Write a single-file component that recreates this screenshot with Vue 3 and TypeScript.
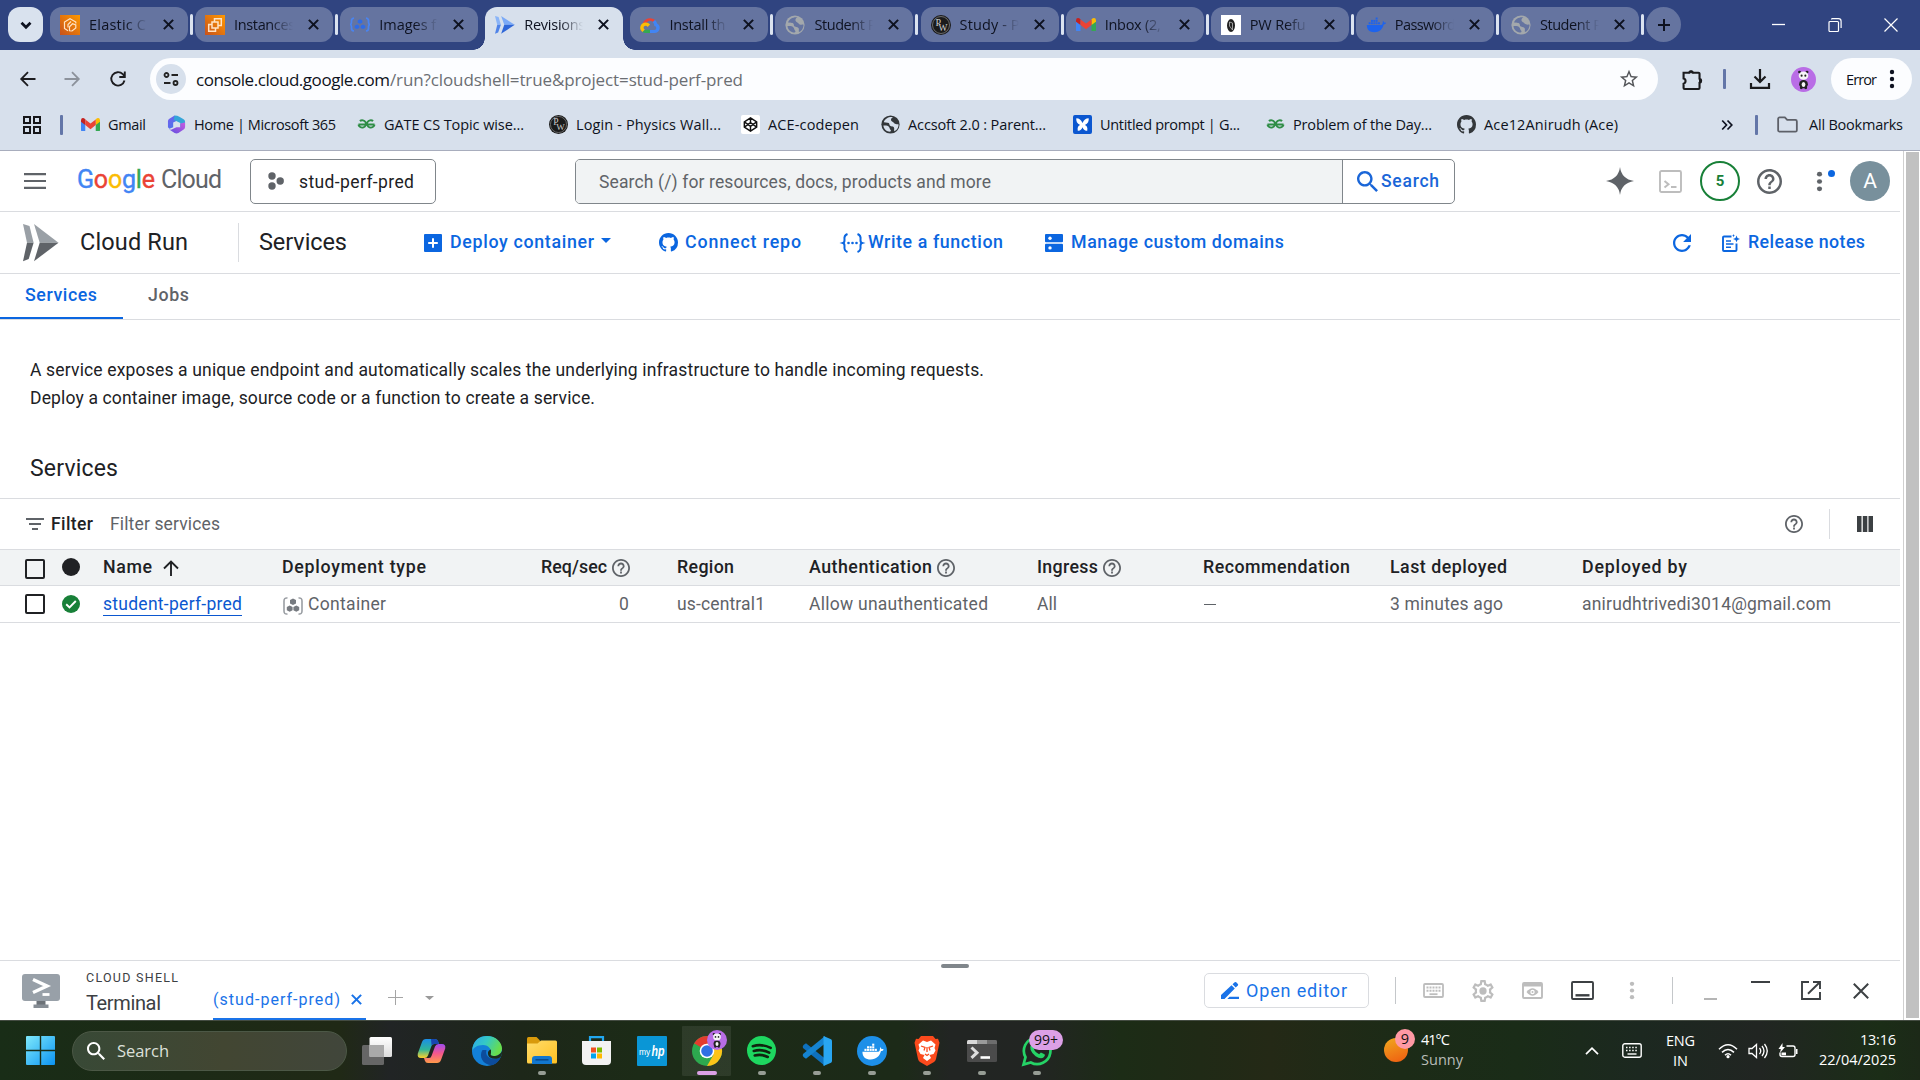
<script setup lang="ts">
import { h } from 'vue'
import type { FunctionalComponent, Directive } from 'vue'

interface Glyph { box: string; body: string }

const GITHUB = 'M8 0C3.58 0 0 3.58 0 8c0 3.54 2.29 6.53 5.47 7.59.4.07.55-.17.55-.38 0-.19-.01-.82-.01-1.49-2.01.37-2.53-.49-2.69-.94-.09-.23-.48-.94-.82-1.13-.28-.15-.68-.52-.01-.53.63-.01 1.08.58 1.23.82.72 1.21 1.87.87 2.33.66.07-.52.28-.87.51-1.07-1.78-.2-3.64-.89-3.64-3.95 0-.87.31-1.59.82-2.15-.08-.2-.36-1.02.08-2.12 0 0 .67-.21 2.2.82.64-.18 1.32-.27 2-.27s1.36.09 2 .27c1.53-1.04 2.2-.82 2.2-.82.44 1.1.16 1.92.08 2.12.51.56.82 1.27.82 2.15 0 3.07-1.87 3.75-3.65 3.95.29.25.54.73.54 1.48 0 1.07-.01 1.93-.01 2.2 0 .21.15.46.55.38A8.01 8.01 0 0 0 16 8c0-4.42-3.58-8-8-8z'
const DOCKER = '<path fill="C" d="M1 10.5h17.2c1.2-.1 1.7-.8 1.6-2 .5-.8.6-2 .2-2.9 1 .4 1.6 1.3 1.8 2.2.9-.2 1.8 0 2.2.4-.4 1.1-1.4 1.7-2.8 1.7C19.8 15.5 16 19 10 19 4.5 19 1 16.2 1 10.5z"/><g fill="C"><rect x="3.2" y="7.4" width="2.3" height="2.3"/><rect x="6" y="7.4" width="2.3" height="2.3"/><rect x="8.8" y="7.4" width="2.3" height="2.3"/><rect x="11.6" y="7.4" width="2.3" height="2.3"/><rect x="14.4" y="7.4" width="2.3" height="2.3"/><rect x="6" y="4.6" width="2.3" height="2.3"/><rect x="8.8" y="4.6" width="2.3" height="2.3"/><rect x="11.6" y="4.6" width="2.3" height="2.3"/><rect x="11.6" y="1.8" width="2.3" height="2.3"/></g>'
const PANDA = '<circle cx="12" cy="12" r="12" fill="#b96de6"/><ellipse cx="12" cy="16.5" rx="4.2" ry="4" fill="#222"/><ellipse cx="12" cy="16.8" rx="1.8" ry="2.4" fill="#f4f4f4"/><circle cx="8.2" cy="4.9" r="1.4" fill="#222"/><circle cx="15.4" cy="4.9" r="1.4" fill="#222"/><ellipse cx="12" cy="8.3" rx="4.6" ry="4" fill="#f6f6f6"/><circle cx="10.2" cy="8.3" r="1" fill="#222"/><circle cx="13.8" cy="8.3" r="1" fill="#222"/><circle cx="9.8" cy="20" r="1.3" fill="#222"/><circle cx="14.2" cy="20" r="1.3" fill="#222"/>'

const glyphs: Record<string, Glyph> = {
  down: { box: '0 0 24 24', body: '<path d="M6 9l6 6 6-6" fill="none" stroke="currentColor" stroke-width="3.6"/>' },
  close: { box: '0 0 10 10', body: '<path d="M.8.8l8.4 8.4M9.2.8L.8 9.2" fill="none" stroke="currentColor" stroke-width="1.9"/>' },
  closeThin: { box: '0 0 16 16', body: '<path d="M.8.8l14.4 14.4M15.2.8L.8 15.2" fill="none" stroke="currentColor" stroke-width="2"/>' },
  plus: { box: '0 0 14 14', body: '<path d="M7 1v12M1 7h12" fill="none" stroke="currentColor" stroke-width="2"/>' },
  plusThin: { box: '0 0 15 15', body: '<path d="M7.500 0v15M0 7.500h15" fill="none" stroke="currentColor" stroke-width="1"/>' },
  winMin: { box: '0 0 14 14', body: '<path d="M0 6.5h13" stroke="#fff" stroke-width="1.3"/>' },
  winRestore: { box: '0 0 14 14', body: '<path d="M1 4.5a1 1 0 0 1 1-1h7.5a1 1 0 0 1 1 1v8a1 1 0 0 1-1 1H2a1 1 0 0 1-1-1zM3.5 1.500a1 1 0 0 1 .9-.8h6.1a2.6 2.6 0 0 1 2.6 2.6v6.7" fill="none" stroke="#fff" stroke-width="1.2"/>' },
  winClose: { box: '0 0 14 14', body: '<path d="M.5.5l13 13M13.500.5l-13 13" stroke="#fff" stroke-width="1.2"/>' },
  ecs: { box: '0 0 20 20', body: '<defs><linearGradient id="aws" x1="0" y1="1" x2="1" y2="0"><stop offset="0" stop-color="#c8511b"/><stop offset="1" stop-color="#f90"/></linearGradient></defs><path fill="url(#aws)" d="M0 0h20v20H0z"/><path d="M15.800 8.500V7L10 3.800 4.500 7v6.500L8 15.800M8 12.500v-3l3-3M9.500 15.800v-4l3-3 3.300 1.200v3L12 16z" fill="none" stroke="#ffe3c4" stroke-width="1.2"/>' },
  ec2: { box: '0 0 20 20', body: '<path fill="url(#aws)" d="M0 0h20v20H0z"/><path d="M7 7h6v6H7zM9.500 7V3.700h6.800v6.800H13M7 9.500H3.700v6.800h6.800V13" fill="none" stroke="#ffe3c4" stroke-width="1.5"/>' },
  registry: { box: '0 0 20 16', body: '<path d="M4 1Q1 1.500 1.500 5 1.500 8 0 8q1.500 0 1.500 3Q1 14.500 4 15M16 1q3 .5 2.500 4 0 3 1.500 3-1.500 0-1.500 3 .5 3.500-2.500 4" fill="none" stroke="#4a84f0" stroke-width="1.7"/><g fill="#2f6be6"><path d="M10 2.500l2.300 1.200v2.400L10 7.300 7.700 6.100V3.700zM7 8l2.300 1.200v2.500L7 12.900l-2.300-1.200V9.200zM13 8l2.300 1.200v2.500L13 12.900l-2.300-1.200V9.200z"/></g>' },
  runBlue: { box: '0 0 36 38', body: '<path d="M0 0l6.500 2 4.100 16.700H4z" fill="#8ab4f8"/><path d="M4 18.700h6.600L5.700 35 0 37.300z" fill="#4f83e8"/><path d="M11 0l24.500 18.700H16.700z" fill="#7baaf7"/><path d="M16.700 18.700h18.800L11 37.300z" fill="#2f67d8"/>' },
  runGray: { box: '0 0 36 38', body: '<path d="M0 0l6.500 2 4.100 16.700H4z" fill="#9aa0a6"/><path d="M4 18.700h6.600L5.700 35 0 37.300z" fill="#5f6368"/><path d="M11 0l24.500 18.700H16.700z" fill="#9aa0a6"/><path d="M16.700 18.700h18.800L11 37.300z" fill="#5f6368"/>' },
  gcp: { box: '0 0 24 20', body: '<path d="M16 5.800l2-2A9.200 9.200 0 0 0 3.300 8l2.700-.3L8.500 6.500A5.400 5.400 0 0 1 15.500 5.900z" fill="#ea4335"/><path d="M20.600 8A9 9 0 0 0 18 3.800L15.200 6.600a5 5 0 0 1 1.900 4v.5a2.500 2.500 0 0 1 0 5H12v3.900h5.100A6.500 6.500 0 0 0 20.600 8z" fill="#4285f4"/><path d="M6.800 20H12v-4H6.800a2.500 2.500 0 0 1-1-.2l-2.900 2.800A6.500 6.500 0 0 0 6.800 20z" fill="#34a853"/><path d="M6.800 6.900A6.500 6.500 0 0 0 2.900 18.600l2.900-2.900a2.500 2.500 0 1 1 3.300-3.300l3-3a6.500 6.500 0 0 0-5.300-2.500z" fill="#fbbc05"/>' },
  globe: { box: '0 0 20 20', body: '<circle cx="10" cy="10" r="9.600" fill="currentColor"/><path d="M12.500 2.300C10 3.500 9.800 6 12 7.200c2 1 1.500 2.300 4.500 2.500 1.800 0 2-.5 2 .8-.6 4.500-3 6-4.500 6.500-.6-1.500.4-2.500-.5-4-1.200-1.600-4.700-.4-4.700-3.500C8.500 7.700 6 8 3 7.600 4 4 8 1.800 12.500 2.300zM2.500 11c2.500-.2 5 0 6 1.500s.5 2 1.500 3 .3 1.700-.5 2C6 17.500 2.800 15 2.500 11z" fill="var(--cut)"/>' },
  pw: { box: '0 0 20 20', body: '<circle cx="10" cy="10" r="10" fill="#1b1b1b"/><circle cx="10" cy="10" r="8.500" fill="none" stroke="#8d8d8d" stroke-width=".7"/><text x="4.600" y="10.800" font-family="Liberation Serif,serif" font-size="10" fill="#ccc">P</text><text x="7.500" y="15.800" font-family="Liberation Serif,serif" font-size="9.500" fill="#ccc">W</text>' },
  pwBox: { box: '0 0 20 20', body: '<path fill="#fff" d="M0 0h20v20H0z"/><ellipse cx="10" cy="10.500" rx="4" ry="6.500" fill="#222"/><path d="M8.500 7v4l3 4V8z" fill="none" stroke="#bbb" stroke-width=".8"/>' },
  gmail: { box: '0 0 20 16', body: '<path d="M0 3.500V14q0 1 1 1h3.500V6z" fill="#4285f4"/><path d="M20 3.500V14q0 1-1 1h-3.500V6z" fill="#34a853"/><path d="M0 3.500v1.500l4.500 3.500V2.600L3.300 1.300Q.3 0 0 3.500z" fill="#c5221f"/><path d="M20 3.500v1.500l-4.500 3.500V2.600l1.200-1.300Q19.700 0 20 3.500z" fill="#fbbc04"/><path d="M4.500 2.600L10 7l5.500-4.400v5.900L10 13 4.500 8.500z" fill="#ea4335"/>' },
  docker: { box: '0 0 24 20', body: DOCKER.replace(/"C"/g, '"#1d63ed"') },
  back: { box: '0 0 16 16', body: '<path d="M15.500 8H1.500M8 1.200L1.200 8 8 14.800" fill="none" stroke="currentColor" stroke-width="1.800"/>' },
  fwd: { box: '0 0 16 16', body: '<path d="M.5 8h14M8 1.200L14.800 8 8 14.800" fill="none" stroke="currentColor" stroke-width="1.800"/>' },
  reload: { box: '0 0 16 16', body: '<path d="M14.500 9.500A6.700 6.700 0 1 1 12.800 3.200L14.500 5M14.800.5V6H9.300" fill="none" stroke="currentColor" stroke-width="1.900"/>' },
  tune: { box: '0 0 16 16', body: '<g fill="none" stroke="currentColor" stroke-width="1.800"><circle cx="3.500" cy="4" r="2"/><path d="M8.500 4H15M1 12h6.500"/><circle cx="12.500" cy="12" r="2"/></g>' },
  star: { box: '0 0 24 24', body: '<path fill="currentColor" d="M22 9.240l-7.190-.62L12 2 9.190 8.630 2 9.240l5.460 4.730L5.820 21 12 17.270 18.180 21l-1.630-7.030L22 9.240zM12 15.400l-3.760 2.270 1-4.280-3.320-2.880 4.380-.38L12 6.100l1.710 4.040 4.380.38-3.320 2.880 1 4.280L12 15.400z"/>' },
  ext: { box: '0 0 20 20', body: '<path d="M1.500 3.500h5.200a2 2 0 0 1 3.800 0h5.200a1 1 0 0 1 1 1v4.800a2 2 0 0 1 0 3.900V18a1 1 0 0 1-1 1H2.500a1 1 0 0 1-1-1v-4a2.600 2.600 0 0 0 0-5z" fill="none" stroke="currentColor" stroke-width="2"/><path d="M6.700 3.500a2 2.200 0 0 1 3.800 0zM16.700 9.300a2.200 2 0 0 1 0 3.900z" fill="currentColor" stroke="currentColor"/>' },
  download: { box: '0 0 20 20', body: '<path d="M10 0v12M4.500 7.500l5.500 5.500 5.500-5.500M1 14v4.800h18V14" fill="none" stroke="currentColor" stroke-width="2.200"/>' },
  panda: { box: '0 0 24 24', body: PANDA },
  dots: { box: '0 0 6 20', body: '<g fill="currentColor"><circle cx="3" cy="3" r="2.200"/><circle cx="3" cy="10" r="2.200"/><circle cx="3" cy="17" r="2.200"/></g>' },
  apps: { box: '0 0 18 18', body: '<path d="M1 1h6v6H1zM11 1h6v6h-6zM1 11h6v6H1zM11 11h6v6h-6z" fill="none" stroke="currentColor" stroke-width="2"/>' },
  m365: { box: '0 0 20 20', body: '<defs><linearGradient id="m3a" x1="0" y1="0" x2="1" y2="1"><stop offset="0" stop-color="#7a5cf0"/><stop offset="1" stop-color="#3a7de8"/></linearGradient><linearGradient id="m3b" x1="0" y1="1" x2="1" y2="0"><stop offset="0" stop-color="#5b4fe0"/><stop offset="1" stop-color="#c95be0"/></linearGradient></defs><path d="M8 .5L2.500 4Q1 5 1 6.500V13l1.500 1.500 4-1.500V8l5-2.500z" fill="url(#m3a)"/><path d="M8 .5q3 0 5 1.300l4.500 2.700Q19 5.500 19 7v5l-5 1V8.500L7 5z" fill="#35a5d8"/><path d="M19 8v5q0 1.500-1.500 2.300L12 19q-2 1-4 0l-6-4q2 1 4.500-.5L10 12.800l4 .2V9z" fill="url(#m3b)"/>' },
  gfg: { box: '0 0 20 12', body: '<path d="M9.300 6H1.500M1.500 6A4 4 0 1 0 3 2.200M10.700 6h7.800M18.500 6A4 4 0 1 1 17 2.200" fill="none" stroke="#2f8d46" stroke-width="2"/>' },
  codepen: { box: '0 0 20 20', body: '<rect width="20" height="20" rx="2" fill="#fff"/><path d="M10 3l6.500 4.300v5.400L10 17l-6.500-4.300V7.300zM10 3v4.500M10 12.500V17M3.500 7.300L10 12l6.500-4.700M3.500 12.700L10 8l6.500 4.700" fill="none" stroke="#111" stroke-width="1.500"/>' },
  prompt: { box: '0 0 20 20', body: '<rect width="20" height="20" rx="2" fill="#0b57d0"/><path d="M3.500 3.500q4.500 0 6.500 5 2-5 6.500-5 .8 5-4 7 3.300 1 2.500 6-3.500.5-5-3.500-1.500 4-5 3.500-.8-5 2.500-6-4.800-2-4-7z" fill="#fff"/>' },
  github: { box: '0 0 16 16', body: `<path fill="currentColor" d="${GITHUB}"/>` },
  more: { box: '0 0 12 12', body: '<path d="M1.200 1.500L5.500 6l-4.300 4.500M6.500 1.500L10.800 6l-4.300 4.500" fill="none" stroke="currentColor" stroke-width="1.700"/>' },
  folder: { box: '0 0 22 18', body: '<path d="M1.200 3a1.500 1.500 0 0 1 1.500-1.500h5.500l2.500 2.700h8.600A1.500 1.500 0 0 1 20.800 5.700v9.300a1.500 1.500 0 0 1-1.500 1.500H2.700A1.500 1.500 0 0 1 1.200 15z" fill="none" stroke="currentColor" stroke-width="1.900"/>' },
  menu: { box: '0 0 22 16', body: '<path d="M0 1.200h22M0 8h22M0 14.800h22" stroke="currentColor" stroke-width="2.200"/>' },
  hexes: { box: '0 0 16 18', body: '<g fill="currentColor"><circle cx="4" cy="4" r="3.700"/><circle cx="12.200" cy="9" r="3.700"/><circle cx="4" cy="14" r="3.700"/></g>' },
  search: { box: '3 3 17.500 17.500', body: '<path fill="currentColor" d="M15.500 14h-.79l-.28-.27C15.410 12.590 16 11.110 16 9.500 16 5.910 13.090 3 9.500 3S3 5.910 3 9.500 5.910 16 9.500 16c1.610 0 3.090-.59 4.230-1.570l.27.28v.79l5 4.990L20.490 19l-4.990-5zm-6 0C7.010 14 5 11.990 5 9.500S7.010 5 9.500 5 14 7.010 14 9.500 11.990 14 9.500 14z"/>' },
  spark: { box: '0 0 28 28', body: '<path fill="currentColor" d="M14 0q1.500 12 14 14-12.500 2-14 14Q12.500 16 0 14 12.500 12 14 0z"/>' },
  shell: { box: '0 0 23 23', body: '<rect x="1" y="1" width="21" height="21" rx="1.500" fill="none" stroke="currentColor" stroke-width="1.900"/><path d="M5.500 11l4 3.300-4 3.300M12 17h5.500" fill="none" stroke="currentColor" stroke-width="2"/>' },
  help: { box: '2 2 20 20', body: '<path fill="currentColor" d="M11 18h2v-2h-2v2zm1-16C6.480 2 2 6.480 2 12s4.480 10 10 10 10-4.480 10-10S17.520 2 12 2zm0 18c-4.410 0-8-3.590-8-8s3.590-8 8-8 8 3.590 8 8-3.590 8-8 8zm0-14c-2.210 0-4 1.790-4 4h2c0-1.100.9-2 2-2s2 .9 2 2c0 2-3 1.750-3 5h2c0-2.250 3-2.500 3-5 0-2.210-1.790-4-4-4z"/>' },
  addBox: { box: '0 0 18 18', body: '<rect width="18" height="18" rx="1" fill="currentColor"/><path d="M9 4.200v9.600M4.200 9h9.600" stroke="#fff" stroke-width="2"/>' },
  caret: { box: '0 0 10 5', body: '<path d="M0 0h10L5 5z" fill="currentColor"/>' },
  func: { box: '0 0 21 20', body: '<path d="M5.500 1Q1.800 2.500 2.500 6.500 2.700 9.500 1 10q1.700.5 1.500 3.500Q1.800 17.500 5.500 19M15.500 1q3.700 1.500 3 5.500-.2 3 1.500 3.500-1.700.5-1.500 3.500.7 4-3 5.500" fill="none" stroke="currentColor" stroke-width="2"/><g fill="currentColor"><circle cx="6.500" cy="10" r="1.300"/><circle cx="10.500" cy="10" r="1.300"/><circle cx="14.500" cy="10" r="1.300"/></g>' },
  dns: { box: '0 0 18 18', body: '<rect width="18" height="8.300" rx="1" fill="currentColor"/><rect y="9.700" width="18" height="8.300" rx="1" fill="currentColor"/><circle cx="5" cy="4.200" r="1.700" fill="#fff"/><circle cx="5" cy="13.900" r="1.700" fill="#fff"/>' },
  refresh: { box: '4 4 16 16', body: '<path fill="currentColor" d="M17.650 6.350C16.200 4.900 14.210 4 12 4c-4.420 0-7.990 3.580-7.990 8s3.570 8 7.990 8c3.730 0 6.840-2.550 7.730-6h-2.080c-.82 2.330-3.040 4-5.650 4-3.310 0-6-2.690-6-6s2.690-6 6-6c1.660 0 3.140.69 4.220 1.780L13 11h7V4l-2.350 2.350z"/>' },
  notes: { box: '0 0 18 18', body: '<path d="M9.500 2.500H2a1 1 0 0 0-1 1V16a1 1 0 0 0 1 1h11.500a1 1 0 0 0 1-1V9.500" fill="none" stroke="currentColor" stroke-width="1.900"/><path d="M4 7h5M4 10h7.500M4 13.200h5" stroke="currentColor" stroke-width="1.500"/><path d="M14.500 1.500l1 2.400 2.500 1-2.500 1-1 2.400-1-2.400-2.500-1 2.500-1zM11.500 0l.5 1.200 1 .5-1 .4-.5 1.200-.5-1.200-1-.4 1-.5z" fill="currentColor"/>' },
  filter: { box: '0 0 18 12', body: '<path d="M0 1h18M3 6h12M6 11h6" stroke="currentColor" stroke-width="2"/>' },
  columns: { box: '0 0 16 16', body: '<path d="M0 0h4.500v16H0zM5.800 0h4.500v16H5.800zM11.500 0H16v16h-4.500z" fill="currentColor"/>' },
  up: { box: '0 0 16 16', body: '<path d="M8 16V1.500M1 8.500l7-7 7 7" fill="none" stroke="currentColor" stroke-width="1.900"/>' },
  ok: { box: '0 0 18 18', body: '<circle cx="9" cy="9" r="9" fill="#188038"/><path d="M4.200 9.300l3.300 3.200 6.300-6.500" fill="none" stroke="#fff" stroke-width="1.900"/>' },
  container: { box: '0 0 20 18', body: '<path d="M4.500 1Q1 .5 1 4v10q0 3.500 3.500 3M15.500 1Q19 .5 19 4v10q0 3.500-3.500 3" fill="none" stroke="#9a9ea3" stroke-width="1.600"/><g fill="#777b80"><path d="M10 1.500l3 1.500v3.500L10 8 7 6.500V3zM6.700 8.500l2.900 1.500v3.300l-2.900 1.500-2.900-1.500V10zM13.300 8.500l2.900 1.500v3.300l-2.900 1.500-2.900-1.500V10z"/></g>' },
  monitor: { box: '0 0 38 34', body: '<rect width="38" height="27" rx="3" fill="#98a0a8"/><path d="M14.500 27h9v4h-9z" fill="#6c7278"/><path d="M11.500 30.500h15V34h-15z" fill="#868d94"/><path d="M11 5.500l14 6.500-14 6.500" fill="none" stroke="#fff" stroke-width="3.400"/><path d="M20.500 20.500h7" stroke="#fff" stroke-width="2.800"/>' },
  pencil: { box: '0 0 19 17', body: '<path d="M0 17v-4L10.500 3.200l3.300 3.300L3.500 17zM11.500 2.300L13.700.3q.8-.6 1.500 0l1.700 1.800q.6.700 0 1.400l-2.200 2.100zM8.500 14.700H18V17H6.300z" fill="currentColor"/>' },
  keyboard: { box: '0 0 21 15', body: '<rect x="1" y="1" width="19" height="13" rx="1" fill="none" stroke="currentColor" stroke-width="1.800"/><path d="M3.500 4.500h14M3.500 7.700h14" stroke="currentColor" stroke-width="2" stroke-dasharray="2 1"/><path d="M6.500 11.200h8" stroke="currentColor" stroke-width="1.800"/>' },
  gear: { box: '2 2 20 20', body: '<path fill="currentColor" d="M19.430 12.980c.04-.32.07-.64.07-.98 0-.34-.03-.66-.07-.98l2.110-1.650c.19-.15.24-.42.12-.64l-2-3.460c-.09-.16-.26-.25-.44-.25-.06 0-.12.010-.17.030l-2.490 1c-.52-.4-1.080-.73-1.690-.98l-.38-2.650C14.460 2.180 14.250 2 14 2h-4c-.25 0-.46.18-.49.42l-.38 2.650c-.61.25-1.170.59-1.690.98l-2.490-1c-.06-.02-.12-.03-.18-.03-.17 0-.34.090-.43.250l-2 3.460c-.13.220-.07.490.120.640l2.110 1.650c-.04.320-.07.650-.07.980 0 .330.030.660.070.980l-2.110 1.650c-.19.150-.24.420-.12.640l2 3.460c.09.160.26.250.44.250.06 0 .12-.01.170-.03l2.490-1c.52.400 1.080.730 1.690.980l.38 2.650c.03.240.24.420.49.420h4c.25 0 .46-.18.490-.42l.38-2.650c.61-.25 1.170-.59 1.690-.98l2.490 1c.06.020.12.030.18.030.17 0 .34-.09.430-.25l2-3.460c.12-.22.070-.49-.12-.64l-2.110-1.650zM17.500 12c0 .210-.02.430-.05.730l-.14 1.130 1.970 1.540-.7 1.210-2.310-.93-.9.680c-.43.320-.84.560-1.250.730l-1.060.430-.36 2.480h-1.400l-.35-2.480-1.060-.43c-.43-.18-.83-.41-1.230-.71l-.91-.7-2.330.940-.7-1.210 1.970-1.540-.14-1.130c-.06-.6-.06-.9 0-1.470l.14-1.130-1.970-1.540.7-1.210 2.310.930.9-.68c.43-.32.840-.56 1.250-.73l1.060-.43.36-2.480h1.390l.35 2.480 1.060.430c.43.180.83.410 1.230.710l.91.700 2.330-.94.700 1.210-1.960 1.550.14 1.130c.04.310.05.520.05.730z"/><circle cx="12" cy="12" r="3.300" fill="currentColor"/>' },
  preview: { box: '0 0 21 17', body: '<rect x="1" y="1" width="19" height="15" rx="1" fill="none" stroke="currentColor" stroke-width="1.900"/><path d="M1 1h19v3.500H1z" fill="currentColor"/><path d="M4.500 10q6-7.500 12 0-6 7.500-12 0z" fill="currentColor"/><circle cx="10.500" cy="10" r="2.200" fill="#fff"/><circle cx="10.500" cy="10" r="1" fill="currentColor"/>' },
  dock: { box: '0 0 23 19', body: '<rect x="1" y="1" width="21" height="17" rx="1" fill="none" stroke="currentColor" stroke-width="1.900"/><path d="M4.500 14.300h14" stroke="currentColor" stroke-width="2.400"/>' },
  openNew: { box: '0 0 20 19', body: '<path d="M8 1H1v17h18v-7M12 1h7v7M19 1L7 12.800" fill="none" stroke="currentColor" stroke-width="1.900"/>' },
  windows: { box: '0 0 29 29', body: '<defs><linearGradient id="wn" x1="0" y1="0" x2="1" y2="1"><stop offset="0" stop-color="#7fe9fb"/><stop offset="1" stop-color="#0b93f2"/></linearGradient></defs><path d="M1 0h12.800v13.800H0V1a1 1 0 0 1 1-1zM15.200 0H28a1 1 0 0 1 1 1v12.800H15.200zM0 15.200h13.800V29H1a1 1 0 0 1-1-1zM15.200 15.200H29V28a1 1 0 0 1-1 1H15.200z" fill="url(#wn)"/>' },
  taskview: { box: '0 0 30 28', body: '<defs><linearGradient id="tv" x1="0" y1="0" x2="0" y2="1"><stop offset="0" stop-color="#fff"/><stop offset="1" stop-color="#dcdcdc"/></linearGradient></defs><rect y="8" width="22" height="20" rx="1.500" fill="#666"/><rect x="7.500" width="22.500" height="20" rx="1.500" fill="url(#tv)"/><path d="M7.500 8H22v12H7.500z" fill="#a9a9a9"/>' },
  copilot: { box: '0 0 29 26', body: '<defs><linearGradient id="cp1" x1="0" y1="0" x2="0" y2="1"><stop offset="0" stop-color="#1b8ee8"/><stop offset=".55" stop-color="#2fb59a"/><stop offset="1" stop-color="#ffd02a"/></linearGradient><linearGradient id="cp2" x1="0" y1="0" x2="0" y2="1"><stop offset="0" stop-color="#a04bf0"/><stop offset=".5" stop-color="#f5588c"/><stop offset="1" stop-color="#ff9a4a"/></linearGradient></defs><path d="M9 1h9q2.500 0 3.200 2.500L22 6h-5q-2 0-2.700 2.500L11 17.500Q10 20 7.500 20H4Q0 20 .8 15.500L5 4Q6 1 9 1z" fill="url(#cp1)"/><path d="M20 25h-9q-2.500 0-3.200-2.500L7 20h5q2 0 2.700-2.500L18 8.500Q19 6 21.500 6H25q4 0 3.200 4.500L24 22q-1 3-4 3z" fill="url(#cp2)"/><path d="M14 1h4q2.500 0 3.200 2.500L22 6h-5q-1.500 0-2.400 1.800z" fill="#1746b0"/>' },
  edge: { box: '0 0 30 30', body: '<defs><linearGradient id="eg" x1="0" y1="0" x2="1" y2=".4"><stop offset="0" stop-color="#2aa7ee"/><stop offset=".5" stop-color="#35c9c4"/><stop offset="1" stop-color="#68dd4c"/></linearGradient></defs><circle cx="15" cy="15" r="15" fill="#1380d8"/><path d="M.5 12Q3 0 15 0c9 0 15 6.500 15 12.500 0 5-4 7.500-7.500 7.500-4 0-5-1.500-4-3C20 14 17 9 11 9 5 9 1 12 .5 15z" fill="url(#eg)"/><path d="M10.500 14c-4 6 0 15 9.500 15.200 3.500-1.200 6.500-3.500 8-6.500.4-.8-.3-1.100-1-.8C20 25 12.500 21 14.500 14z" fill="#0c4c9c"/><path d="M19 17q-1.500 3.500 4 3 5-.8 7-5 .6 3-1.500 6.200-.5.200-1.500.7-5 2-9-.5-2.500-2-2-5.500 1-2.500 3-2.500z" fill="#1c2b1a"/>' },
  explorer: { box: '0 0 30 27', body: '<defs><linearGradient id="ex" x1="0" y1="0" x2="1" y2="1"><stop offset="0" stop-color="#ffdc6b"/><stop offset="1" stop-color="#ffc122"/></linearGradient></defs><path d="M0 1.500Q0 0 1.500 0h8L13 3.500V8H0z" fill="#d99a0b"/><path d="M0 6.500h10.500L14 3.500h14.500Q30 3.500 30 5v20q0 1.500-1.500 1.500h-27Q0 26.500 0 25z" fill="url(#ex)"/><path d="M5 27v-5q0-3 3-3h14q3 0 3 3v5z" fill="#1277cf"/><path d="M8.500 22.800h13" stroke="#0a4a8c" stroke-width="1.500"/>' },
  store: { box: '0 0 29 29', body: '<path d="M8 7V1.200h13V7" fill="none" stroke="#21a7f0" stroke-width="2.200"/><path d="M0 5h29v20q0 4-4 4H4q-4 0-4-4z" fill="#f2f2f2"/><path d="M9 11.500h5v5H9z" fill="#f25022"/><path d="M15 11.500h5v5h-5z" fill="#7fba00"/><path d="M9 17.500h5v5H9z" fill="#00a4ef"/><path d="M15 17.500h5v5h-5z" fill="#ffb900"/>' },
  myhp: { box: '0 0 30 30', body: '<rect width="30" height="30" rx="1" fill="#0a96d6"/><text x="2" y="18.500" font-family="Liberation Sans,sans-serif" font-size="8.500" fill="#fff">my</text><text x="14.500" y="19.500" font-family="Liberation Sans,sans-serif" font-size="14" font-style="italic" font-weight="700" textLength="13" lengthAdjust="spacingAndGlyphs" fill="#fff">hp</text>' },
  chrome: { box: '0 0 30 30', body: '<circle cx="15" cy="15" r="15" fill="#2da94f"/><path d="M15 15L2 7.500A15 15 0 0 1 28 7.500H15z" fill="#e33b2e"/><path d="M15 7.500h13A15 15 0 0 1 15 30l6.500-11.300z" fill="#fcc419"/><path d="M2 7.500l6.500 11.200L15 15z" fill="#2da94f"/><circle cx="15" cy="15" r="7.300" fill="#fff"/><circle cx="15" cy="15" r="5.800" fill="#2f6fe4"/>' },
  spotify: { box: '0 0 30 30', body: '<circle cx="15" cy="15" r="15" fill="#1ed760"/><path d="M6 10.500q9.500-2.700 18.500 1.800M7 15.500q8.500-2.300 16 1.700M8 20.200q7-1.900 13.500 1.500" fill="none" stroke="#10240f" stroke-width="2.700" stroke-linecap="round"/>' },
  vscode: { box: '0 0 30 30', body: '<path d="M1.500 9L4 7.300 23 22.500V30L1 12q-.8-1.500.5-3z" fill="#0e70bd"/><path d="M1.500 21L4 22.700 23 7.500V0L1 18q-.8 1.500.5 3z" fill="#1583d0"/><path d="M21.500 0L29 3.200q1 .6 1 2v19.600q0 1.400-1 2L21.500 30Z" fill="#29a6f2"/>' },
  dockerApp: { box: '0 0 30 30', body: `<circle cx="15" cy="15" r="15" fill="#1d8fe8"/><g transform="translate(4.500 6) scale(.92)">${DOCKER.replace(/"C"/g, '"#fff"')}</g>` },
  brave: { box: '0 0 26 30', body: '<path d="M7 0h12l2.500 3 2.500-.3 1.500 4L25 9l-3 14q-.5 2-2 3l-7 4-7-4q-1.500-1-2-3L1 9 .5 6.700 2 2.700l2.500.3z" fill="#fb4a1c"/><path d="M13 6l4-1.500 4.500 4-1 3.500 1 2.500-2 3.500-4 1 1.500 3-4 3-4-3 1.500-3-4-1-2-3.500 1-2.500-1-3.500L9 4.500z" fill="#fff"/><path d="M7 10l4 1.500-1 3M19 10l-4 1.500 1 3M11 18l2 1.500 2-1.500M13 11v5" fill="none" stroke="#fb4a1c" stroke-width="1.300"/>' },
  terminal: { box: '0 0 30 22', body: '<rect width="30" height="22" rx="1.500" fill="#4b4b4b"/><path d="M0 4V1.500Q0 0 1.500 0H10v4z" fill="#d8d8d8"/><path d="M10 0h10v4H10z" fill="#9b9b9b"/><path d="M20 0h8.500Q30 0 30 1.500V4H20z" fill="#6d6d6d"/><path d="M4.500 7.500l5.500 5.200-5.500 5.200" fill="none" stroke="#ddd" stroke-width="3"/><path d="M13.500 17.500H23" stroke="#fff" stroke-width="2.600"/>' },
  whatsapp: { box: '0 0 30 30', body: '<path d="M1.500 28.500l2-7.300A13.300 13.300 0 1 1 8.800 26.500z" fill="none" stroke="#25d366" stroke-width="2.700"/><path d="M9 8.500q2-2 3 .2l1.200 2.700q-.4 1.300-1.300 2 1.900 3.500 5.200 4.800l1.800-1.700 3.600 1.700q1.200.8-.5 2.800-3 2.800-8.400-.8Q6 14 9 8.500z" fill="#25d366"/>' },
  chevUp: { box: '0 0 14 8', body: '<path d="M1 7.200l6-6 6 6" fill="none" stroke="#fff" stroke-width="1.700"/>' },
  kbWin: { box: '0 0 20 15', body: '<rect x=".8" y=".8" width="18.400" height="13.400" rx="2" fill="none" stroke="#fff" stroke-width="1.400"/><path d="M4 4.500h12M4 7.500h12" stroke="#fff" stroke-width="1.600" stroke-dasharray="1.500 1.600"/><path d="M5.500 11h9" stroke="#fff" stroke-width="1.400"/>' },
  wifi: { box: '0 0 20 16', body: '<path d="M1 6.200q9-9 18 0M4 9.400q6-6 12 0M7 12.300q3-3 6 0" fill="none" stroke="#fff" stroke-width="1.500"/><circle cx="10" cy="13.700" r="1.600" fill="#fff"/>' },
  volume: { box: '0 0 20 16', body: '<path d="M1 5.500h3L8.500 1.500v13L4 10.500H1zM11.500 5q2.500 3 0 6M14 3q4 5 0 10M16.500 1q5.500 7 0 14" fill="none" stroke="#fff" stroke-width="1.300"/>' },
  battery: { box: '0 0 20 16', body: '<path d="M8.500 3H15a2 2 0 0 1 2 2v6.500a2 2 0 0 1-2 2H4a2 2 0 0 1-2-2V9.500" fill="none" stroke="#fff" stroke-width="1.400"/><path d="M18 6h1.500v5H18zM3.500 9.500H8v2.700H3.500zM4.500 0l-4 6h2.300L2 10l5-6H4.500z" fill="#fff"/>' },
}

const Ico: FunctionalComponent<{ n: string; w: number; t?: number }> = (p) =>
  h('svg', {
    viewBox: glyphs[p.n].box,
    width: p.w,
    height: p.t ?? p.w,
    preserveAspectRatio: 'none',
    class: 'ico',
    innerHTML: glyphs[p.n].body,
  })
Ico.props = ['n', 'w', 't']

/* Tracks a label out or in so it takes exactly the given width. */
const vFit: Directive<HTMLElement, number> = {
  mounted(el, { value }) {
    const range = document.createRange()
    range.selectNodeContents(el)
    const natural = range.getBoundingClientRect().width
    const count = Math.max(1, (el.textContent ?? '').trim().length - 1)
    el.style.letterSpacing = `${((value - natural) / count).toFixed(3)}px`
    el.style.width = `${value}px`
  },
}

interface Tab { icon: string; h?: number; label: string; w: number; active?: boolean; sep?: boolean }
const tabs: Tab[] = [
  { icon: 'ecs', label: 'Elastic C', w: 57, sep: true },
  { icon: 'ec2', label: 'Instances', w: 61, sep: true },
  { icon: 'registry', h: 15, label: 'Images f', w: 57 },
  { icon: 'runBlue', h: 18, label: 'Revisions', w: 61, active: true },
  { icon: 'gcp', h: 16, label: 'Install th', w: 56, sep: true },
  { icon: 'globe', label: 'Student P', w: 62, sep: true },
  { icon: 'pw', label: 'Study - P', w: 60, sep: true },
  { icon: 'gmail', h: 15, label: 'Inbox (2,', w: 56, sep: true },
  { icon: 'pwBox', label: 'PW Refu', w: 56, sep: true },
  { icon: 'docker', h: 17, label: 'Password', w: 61, sep: true },
  { icon: 'globe', label: 'Student P', w: 62, sep: true },
]

interface Mark { icon: string; h?: number; label: string; w: number; slot: number }
const marks: Mark[] = [
  { icon: 'gmail', h: 15, label: 'Gmail', w: 38, slot: 86 },
  { icon: 'm365', label: 'Home | Microsoft 365', w: 142, slot: 190 },
  { icon: 'gfg', h: 11, label: 'GATE CS Topic wise...', w: 140, slot: 192 },
  { icon: 'pw', label: 'Login - Physics Wall...', w: 145, slot: 192 },
  { icon: 'codepen', label: 'ACE-codepen', w: 91, slot: 140 },
  { icon: 'globe', label: 'Accsoft 2.0 : Parent...', w: 138, slot: 192 },
  { icon: 'prompt', label: 'Untitled prompt | G...', w: 140, slot: 193 },
  { icon: 'gfg', h: 11, label: 'Problem of the Day...', w: 139, slot: 191 },
  { icon: 'github', label: 'Ace12Anirudh (Ace)', w: 134, slot: 200 },
]

interface App { icon: string; w: number; h: number; run?: boolean; on?: boolean; badge?: string }
const apps: App[] = [
  { icon: 'taskview', w: 30, h: 28 },
  { icon: 'copilot', w: 29, h: 26 },
  { icon: 'edge', w: 30, h: 30 },
  { icon: 'explorer', w: 30, h: 27, run: true },
  { icon: 'store', w: 29, h: 29 },
  { icon: 'myhp', w: 30, h: 30 },
  { icon: 'chrome', w: 30, h: 30, on: true },
  { icon: 'spotify', w: 29, h: 29, run: true },
  { icon: 'vscode', w: 30, h: 30, run: true },
  { icon: 'dockerApp', w: 30, h: 30, run: true },
  { icon: 'brave', w: 26, h: 30, run: true },
  { icon: 'terminal', w: 30, h: 22, run: true },
  { icon: 'whatsapp', w: 30, h: 30, run: true, badge: '99+' },
]
</script>

<template>
  <div class="screen">
    <header class="strip">
      <button class="tabsearch"><Ico n="down" :w="18" /></button>
      <div class="tabs">
        <div v-for="(t, i) in tabs" :key="i" class="tabcell">
          <div class="tab" :class="{ active: t.active }">
            <span class="fav"><Ico :n="t.icon" :w="20" :t="t.h ?? 20" /></span>
            <span class="tabtext"><span v-fit="t.w">{{ t.label }}</span></span>
            <Ico n="close" :w="11" class="tabx" />
          </div>
          <i v-if="t.sep" class="tabsep"></i>
        </div>
      </div>
      <button class="newtab"><Ico n="plus" :w="14" /></button>
      <div class="wincontrols">
        <Ico n="winMin" :w="14" /><Ico n="winRestore" :w="14" /><Ico n="winClose" :w="14" />
      </div>
    </header>

    <div class="toolbar">
      <Ico n="back" :w="16" class="navback" />
      <Ico n="fwd" :w="16" class="navfwd" />
      <Ico n="reload" :w="16" class="navreload" />
      <div class="omnibox">
        <span class="chip"><Ico n="tune" :w="16" /></span>
        <span v-fit="194" class="host">console.cloud.google.com</span>
        <span v-fit="353" class="path">/run?cloudshell=true&amp;project=stud-perf-pred</span>
        <Ico n="star" :w="22" class="star" />
      </div>
      <Ico n="ext" :w="21" class="extn" />
      <i class="vbar"></i>
      <Ico n="download" :w="20" class="dl" />
      <Ico n="panda" :w="25" class="panda" />
      <div class="errpill"><span v-fit="31">Error</span><Ico n="dots" :w="6" :t="20" /></div>
    </div>

    <div class="bookmarks">
      <Ico n="apps" :w="18" class="appsico" />
      <i class="vbar"></i>
      <div class="marks">
        <div v-for="m in marks" :key="m.label" class="mark" :style="{ width: m.slot + 'px' }">
          <Ico :n="m.icon" :w="19" :t="m.h ?? 19" /><span v-fit="m.w">{{ m.label }}</span>
        </div>
      </div>
      <Ico n="more" :w="12" class="moreico" />
      <i class="vbar"></i>
      <Ico n="folder" :w="21" :t="17" class="folder" />
      <span v-fit="94">All Bookmarks</span>
    </div>

    <div class="viewport">
      <main class="page">
        <div class="gbar">
          <Ico n="menu" :w="22" :t="16" class="burger" />
          <div class="logo">
            <span v-fit="78" class="goog"><b class="cb">G</b><b class="cr">o</b><b class="cy">o</b><b class="cb">g</b><b class="cg">l</b><b class="cr">e</b></span>
            <span v-fit="61" class="cloud">Cloud</span>
          </div>
          <div class="project"><Ico n="hexes" :w="16" :t="18" /><span v-fit="115">stud-perf-pred</span></div>
          <div class="searchbox">
            <div class="query"><span v-fit="392">Search (/) for resources, docs, products and more</span></div>
            <div class="searchbtn"><Ico n="search" :w="21" :t="21" /><span v-fit="58">Search</span></div>
          </div>
          <div class="gtools">
            <Ico n="spark" :w="28" class="gray" />
            <Ico n="shell" :w="23" class="pale" />
            <span class="count">5</span>
            <Ico n="help" :w="25" class="gray" />
            <span class="kebab"><Ico n="dots" :w="7" :t="21" class="gray" /><i></i></span>
            <span class="avatar">A</span>
          </div>
        </div>

        <div class="runbar">
          <Ico n="runGray" :w="36" :t="38" class="runlogo" />
          <span v-fit="108" class="product">Cloud Run</span>
          <span class="section"><span v-fit="88">Services</span></span>
          <div class="actions">
            <a class="a1"><Ico n="addBox" :w="18" /><span v-fit="144">Deploy container</span><Ico n="caret" :w="10" :t="5" class="caret" /></a>
            <a class="a2"><Ico n="github" :w="19" /><span v-fit="116">Connect repo</span></a>
            <a class="a3"><Ico n="func" :w="21" :t="20" /><span v-fit="135">Write a function</span></a>
            <a class="a4"><Ico n="dns" :w="18" /><span v-fit="213">Manage custom domains</span></a>
          </div>
          <div class="actions end">
            <Ico n="refresh" :w="18" />
            <a class="a5"><Ico n="notes" :w="18" /><span v-fit="117">Release notes</span></a>
          </div>
        </div>

        <nav class="pagetabs">
          <a class="cur"><span v-fit="72">Services</span></a>
          <a class="jobs"><span v-fit="41">Jobs</span></a>
        </nav>

        <section class="intro">
          <p><span v-fit="954">A service exposes a unique endpoint and automatically scales the underlying infrastructure to handle incoming requests.</span></p>
          <p><span v-fit="565">Deploy a container image, source code or a function to create a service.</span></p>
          <h2><span v-fit="88">Services</span></h2>
        </section>

        <div class="filter">
          <Ico n="filter" :w="18" :t="12" class="fico" />
          <span v-fit="42" class="flabel">Filter</span>
          <span v-fit="110" class="fhint">Filter services</span>
          <div class="fend"><Ico n="help" :w="18" /><i></i><Ico n="columns" :w="16" class="cols" /></div>
        </div>

        <div class="row head">
          <span class="box"></span>
          <span class="dot"></span>
          <span class="cell"><span v-fit="49">Name</span><Ico n="up" :w="16" class="uparrow" /></span>
          <span class="cell"><span v-fit="144">Deployment type</span></span>
          <span class="cell"><span v-fit="66">Req/sec</span><Ico n="help" :w="18" class="hq" /></span>
          <span class="cell"><span v-fit="57">Region</span></span>
          <span class="cell"><span v-fit="123">Authentication</span><Ico n="help" :w="18" class="hq" /></span>
          <span class="cell"><span v-fit="61">Ingress</span><Ico n="help" :w="18" class="hq" /></span>
          <span class="cell"><span v-fit="147">Recommendation</span></span>
          <span class="cell"><span v-fit="117">Last deployed</span></span>
          <span class="cell"><span v-fit="105">Deployed by</span></span>
        </div>
        <div class="row body">
          <span class="box"></span>
          <Ico n="ok" :w="18" />
          <span class="cell"><a v-fit="139" class="link">student-perf-pred</a></span>
          <span class="cell"><Ico n="container" :w="20" :t="18" class="cico" /><span v-fit="78">Container</span></span>
          <span class="cell num">0</span>
          <span class="cell"><span v-fit="88">us-central1</span></span>
          <span class="cell"><span v-fit="179">Allow unauthenticated</span></span>
          <span class="cell"><span v-fit="20">All</span></span>
          <span class="cell"><i class="dash"></i></span>
          <span class="cell"><span v-fit="113">3 minutes ago</span></span>
          <span class="cell"><span v-fit="249">anirudhtrivedi3014@gmail.com</span></span>
        </div>

        <div class="blank"></div>

        <section class="shell">
          <i class="handle"></i>
          <Ico n="monitor" :w="38" :t="34" class="monitor" />
          <div class="shellname">
            <small><span v-fit="92">CLOUD SHELL</span></small>
            <strong><span v-fit="75">Terminal</span></strong>
          </div>
          <div class="session"><span v-fit="127">(stud-perf-pred)</span><Ico n="close" :w="11" /></div>
          <Ico n="plusThin" :w="15" class="addsession" />
          <Ico n="caret" :w="9" :t="4" class="sesscaret" />
          <div class="shelltools">
            <div class="editor"><Ico n="pencil" :w="19" :t="17" /><span v-fit="101">Open editor</span></div>
            <i class="rule"></i>
            <Ico n="keyboard" :w="21" :t="15" class="pale t1" />
            <Ico n="gear" :w="22" class="pale t2" />
            <Ico n="preview" :w="21" :t="17" class="pale t3" />
            <Ico n="dock" :w="23" :t="19" class="dark t4" />
            <Ico n="dots" :w="6" :t="19" class="pale t5" />
            <i class="rule r2"></i>
            <i class="low"></i>
            <i class="high"></i>
            <Ico n="openNew" :w="20" :t="19" class="dark t6" />
            <Ico n="closeThin" :w="16" class="dark t7" />
          </div>
        </section>
      </main>
      <div class="gutter"><i></i></div>
    </div>

    <footer class="taskbar">
      <Ico n="windows" :w="29" class="start" />
      <div class="tsearch"><Ico n="search" :w="18" :t="18" class="mag" /><span v-fit="52">Search</span></div>
      <div class="apps">
        <div v-for="a in apps" :key="a.icon" class="app" :class="{ on: a.on, run: a.run }">
          <Ico :n="a.icon" :w="a.w" :t="a.h" />
          <Ico v-if="a.on" n="panda" :w="20" class="mini" />
          <span v-if="a.badge" class="badge">{{ a.badge }}</span>
        </div>
      </div>
      <div class="weather">
        <span class="sun"><b>9</b></span>
        <div><span v-fit="29">41°C</span><span v-fit="42" class="dim">Sunny</span></div>
      </div>
      <div class="tray">
        <Ico n="chevUp" :w="14" :t="8" />
        <Ico n="kbWin" :w="20" :t="15" class="kb" />
        <div class="lang"><span v-fit="29">ENG</span><span v-fit="15">IN</span></div>
        <Ico n="wifi" :w="20" :t="16" />
        <Ico n="volume" :w="20" :t="16" />
        <Ico n="battery" :w="20" :t="16" />
        <div class="clock"><span v-fit="36">13:16</span><span v-fit="77">22/04/2025</span></div>
      </div>
    </footer>
  </div>
</template>

<style>
html, body { margin: 0; background: #fff; overflow: hidden; }
</style>

<style scoped>
.screen { width: 1920px; height: 1080px; display: flex; flex-direction: column; overflow: hidden; font-family: "Open Sans", "Noto Sans", sans-serif; font-size: 14.5px; color: #0e1220; white-space: nowrap; }
.ico { display: block; flex: none; overflow: visible; }
i { display: block; flex: none; }
button { border: 0; padding: 0; color: inherit; display: flex; align-items: center; justify-content: center; flex: none; }

/* tab strip */
.strip { height: 50px; flex: none; background: #304480; display: flex; align-items: flex-start; --cut: #6574a0; }
.tabsearch { width: 35px; height: 35px; border-radius: 12px; background: #d9e2ee; margin: 7px 7px 0 8px; }
.tabs { display: flex; }
.tabcell { width: 145.1px; display: flex; align-items: flex-start; padding-top: 7px; height: 43px; }
.tab { box-sizing: border-box; width: 138px; height: 35px; border-radius: 12px; background: #6574a0; display: flex; align-items: center; padding-left: 10px; flex: none; position: relative; }
.tab.active { height: 43px; background: #d7e0ec; border-radius: 12px 12px 0 0; padding-bottom: 8px; }
.tab.active::before, .tab.active::after { content: ""; position: absolute; bottom: 0; width: 12px; height: 12px; }
.tab.active::before { left: -12px; background: radial-gradient(circle at 0 0, transparent 11.5px, #d7e0ec 12px); }
.tab.active::after { right: -12px; background: radial-gradient(circle at 100% 0, transparent 11.5px, #d7e0ec 12px); }
.fav { width: 20px; margin-right: 9px; color: #a3a8ac; }
.tabtext { width: 66px; display: block; mask-image: linear-gradient(90deg, #000 36px, transparent 59px); }
.tabtext span { display: block; }
.tabx { margin-left: 8px; }
.tabsep { width: 3px; height: 21px; border-radius: 2px; background: #dbe3f0; margin: 7px 0 0 2px; }
.newtab { width: 35px; height: 35px; border-radius: 50%; background: #6574a0; margin: 7px 0 0; }
.wincontrols { margin: 18px 22px 0 auto; display: flex; gap: 42px; }

/* toolbar */
.toolbar { height: 58px; flex: none; background: #d7e0ec; display: flex; align-items: center; }
.navback { margin-left: 20px; color: #1c1c1f; }
.navfwd { margin-left: 28px; color: #8c929b; }
.navreload { margin-left: 30px; color: #1c1c1f; }
.omnibox { width: 1508px; height: 42px; border-radius: 21px; background: #fcfdff; margin-left: 24px; display: flex; align-items: center; box-sizing: border-box; padding-left: 6px; font-size: 17px; flex: none; }
.chip { width: 30px; height: 30px; border-radius: 50%; background: #d7e0ec; display: flex; align-items: center; justify-content: center; margin-right: 10px; color: #222; }
.path { color: #6b6e73; }
.star { margin: 0 18px 0 auto; color: #54565a; }
.extn { margin-left: 24px; color: #1b1b1e; }
.vbar { width: 3px; height: 20px; border-radius: 1px; background: #6376a8; }
.toolbar .vbar { margin-left: 20px; }
.dl { margin-left: 24px; color: #1b1b1e; }
.panda { margin-left: 21px; }
.errpill { box-sizing: border-box; width: 81px; height: 42px; border-radius: 21px; background: #fcfdff; margin-left: 15px; padding-left: 15px; display: flex; align-items: center; gap: 12px; }

/* bookmarks */
.bookmarks { height: 42px; flex: none; box-sizing: border-box; padding-bottom: 9px; background: #d7e0ec; display: flex; align-items: center; --cut: #d7e0ec; }
.appsico { margin: 0 19px 0 23px; color: #17171a; }
.marks { display: flex; margin-left: 18px; width: 1641px; }
.mark { display: flex; align-items: center; gap: 8px; flex: none; }
.mark .ico { color: #33373a; }
.moreico { margin: 0 22px 0 -1px; }
.folder { margin: 0 11px 0 19px; color: #5d6068; }

/* page */
.viewport { flex: 1; min-height: 0; display: flex; border-top: 1px solid #a8adbd; background: #fff; }
.page { width: 1900px; display: flex; flex-direction: column; font-family: Roboto, sans-serif; font-size: 17.5px; color: #202124; flex: none; }
.gutter { width: 16px; box-sizing: border-box; border-left: 1px solid #d0d0d0; margin-left: 3px; padding: 1px 1px 2px 2px; display: flex; }
.gutter i { width: 13px; background: #c1c1c1; }
.gray { color: #5f6368; }
.pale { color: #bdbdbd; }
.dark { color: #3c4043; }

.gbar { height: 60px; flex: none; border-bottom: 1px solid #dadce0; display: flex; align-items: center; }
.burger { margin-left: 24px; color: #5f6368; }
.logo { display: flex; margin-left: 31px; font-size: 25px; gap: 6px; line-height: 30px; margin-top: -2px; }
.logo b { font-weight: 400; -webkit-text-stroke: .4px; }
.cloud { color: #5f6368; }
.cb { color: #4285f4; } .cr { color: #ea4335; } .cy { color: #fbbc04; } .cg { color: #34a853; }
.project { box-sizing: border-box; width: 186px; height: 45px; border: 1px solid #80868b; border-radius: 5px; margin-left: 28px; display: flex; align-items: center; padding-left: 17px; gap: 15px; color: #202124; flex: none; }
.project .ico { color: #5f6368; }
.project span, .query span { margin-top: 2px; }
.searchbox { box-sizing: border-box; width: 880px; height: 45px; border: 1px solid #80868b; border-radius: 5px; margin-left: 139px; display: flex; overflow: hidden; flex: none; }
.query { width: 767px; background: #f1f3f4; color: #5f6368; display: flex; align-items: center; padding-left: 23px; box-sizing: border-box; border-right: 1px solid #80868b; }
.searchbtn { display: flex; align-items: center; color: #1a66d8; font-weight: 500; gap: 3px; padding-left: 14px; }
.gtools { margin: 0 10px 0 auto; display: flex; align-items: center; }
.gtools .pale { margin-left: 25px; }
.count { width: 40px; height: 40px; box-sizing: border-box; border: 2px solid #188038; border-radius: 50%; margin: 0 17px 0 18px; display: flex; align-items: center; justify-content: center; color: #188038; font-size: 15px; font-weight: 700; }
.kebab { margin-left: 34px; position: relative; }
.kebab i { position: absolute; width: 7px; height: 7px; border-radius: 50%; background: #0b66e0; left: 12px; top: -1px; }
.avatar { width: 40px; height: 40px; border-radius: 50%; background: #78909c; color: #fff; font-size: 21px; display: flex; align-items: center; justify-content: center; margin-left: 27px; }

.runbar { height: 61px; flex: none; border-bottom: 1px solid #dadce0; display: flex; align-items: center; }
.runlogo { margin-left: 23px; }
.product { font-size: 23.5px; margin-left: 21px; margin-top: -2px; }
.section { font-size: 23.5px; margin-left: 50px; border-left: 1px solid #dadce0; padding-left: 20px; height: 39px; display: flex; align-items: center; }
.section span { margin-top: -2px; }
.actions { display: flex; align-items: center; color: #0b66e0; font-weight: 500; font-size: 17.8px; }
.actions a { display: flex; align-items: center; gap: 8px; }
.actions a span { margin-top: -2px; }
.a1 { margin-left: 77px; width: 235px; } .a2 { width: 183px; } .a3 { width: 203px; }
.actions .a2 { gap: 7px; }
.actions .a3 { gap: 5px; }
.caret { margin-top: -4px; margin-left: -1px; }
.end { margin: 0 35px 0 auto; }
.a5 { margin-left: 31px; }

.pagetabs { height: 45px; flex: none; border-bottom: 1px solid #dadce0; display: flex; font-weight: 500; font-size: 17.8px; color: #5f6368; }
.pagetabs a { display: flex; align-items: center; padding-bottom: 4px; }
.cur { width: 98px; padding-left: 25px; color: #0b66e0; box-shadow: inset 0 -2px #0b66e0; }
.jobs { padding-left: 25px; }

.intro { flex: none; border-bottom: 1px solid #dadce0; padding: 36px 0 0 30px; height: 142px; }
.intro p { margin: 0; line-height: 28px; font-size: 17.5px; }
.intro h2 { margin: 42px 0 0; font-size: 23px; line-height: 30px; font-weight: 400; }

.filter { height: 50px; flex: none; border-bottom: 1px solid #dadce0; display: flex; align-items: center; }
.fico { margin-left: 26px; color: #5f6368; }
.flabel { margin-left: 7px; font-weight: 500; }
.fhint { margin-left: 17px; color: #5f6368; }
.fend { margin: 0 27px 0 auto; display: flex; align-items: center; color: #5f6368; }
.fend i { width: 1px; height: 30px; background: #dadce0; margin: 0 27px 0 26px; }
.fend .cols { color: #3c4043; }

.row { display: grid; grid-template-columns: 37px 41px 179px 259px 136px 132px 228px 166px 187px 192px 1fr; padding-left: 25px; height: 35px; flex: none; align-items: center; border-bottom: 1px solid #dadce0; }
.head { background: #f1f3f4; font-weight: 500; font-size: 17.8px; }
.head .cell span { margin-top: -2px; }
.body { color: #5f6368; height: 36px; }
.cell { display: flex; align-items: center; }
.box { width: 20px; height: 20px; box-sizing: border-box; border: 2px solid #202124; border-radius: 2px; }
.head .box { margin-top: 2px; }
.dot { width: 18px; height: 18px; border-radius: 50%; background: #202124; margin-top: -1px; }
.uparrow { margin-left: 11px; }
.hq { margin-left: 5px; color: #5f6368; }
.num { padding-left: 78px; }
.link { color: #0b57d0; border-bottom: 1px solid #0b57d0; line-height: 21px; margin-top: 2px; }
.cico { margin: 3px 5px 0 1px; }
.dash { width: 12px; height: 1px; background: #5f6368; margin-left: 1px; }
.blank { flex: 1; }

.shell { height: 59px; flex: none; border-top: 1px solid #dadce0; display: flex; position: relative; }
.handle { position: absolute; left: 941px; top: 3px; width: 28px; height: 4px; border-radius: 2px; background: #80868b; }
.monitor { margin: 13px 0 0 22px; }
.shellname { margin: 8px 0 0 26px; display: flex; flex-direction: column; color: #3c4043; width: 127px; }
.shellname small { font-size: 12.5px; line-height: 18px; }
.shellname strong { font-weight: 400; font-size: 20px; line-height: 32px; }
.session { width: 153px; box-sizing: border-box; border-bottom: 2px solid #1a73e8; color: #1a73e8; font-size: 16px; display: flex; align-items: center; gap: 11px; padding-top: 20px; }
.addsession { margin: 29px 0 0 22px; color: #a5a5a5; }
.sesscaret { margin: 35px 0 0 22px; color: #9a9a9a; }
.shelltools { margin: 0 31px 0 auto; display: flex; align-items: center; }
.editor { box-sizing: border-box; width: 165px; height: 35px; border: 1px solid #dadce0; border-radius: 5px; display: flex; align-items: center; gap: 6px; padding-left: 16px; color: #1a73e8; font-size: 18px; }
.rule { width: 1px; height: 27px; background: #c4c7ca; margin-left: 26px; }
.t1 { margin-left: 27px; } .t2 { margin-left: 28px; } .t3 { margin-left: 28px; } .t4 { margin-left: 28px; } .t5 { margin-left: 35px; }
.r2 { margin-left: 37px; }
.low { width: 13px; height: 2px; background: #b5b5b5; margin: 17px 0 0 31px; }
.high { width: 19px; height: 2px; background: #3c4043; margin: -17px 0 0 34px; }
.t6 { margin-left: 31px; } .t7 { margin-left: 32px; }

/* taskbar */
.taskbar { height: 60px; flex: none; box-sizing: border-box; border-top: 1px solid #444c42; background: linear-gradient(90deg, #192d17 0, #1c2a16 180px, #202916 340px, #212425 390px, #1d2719 520px, #1c2b17 640px, #1c2a18 900px, #222523 950px, #222522 1040px, #1c2c16 1120px, #202a16 1200px, #242916 1270px, #1c2b17 1400px, #1a2c18 1520px, #1c2820 1640px, #212522 1760px, #1b2d17 1880px, #1c2918 1920px); display: flex; align-items: center; color: #fff; }
.start { margin-left: 26px; }
.tsearch { box-sizing: border-box; width: 275px; height: 40px; border-radius: 20px; border: 1px solid #4c5846; background: linear-gradient(90deg, #384936, #424632 55%, #41463b); margin-left: 17px; display: flex; align-items: center; padding-left: 14px; gap: 12px; font-size: 16.5px; color: #dde0da; flex: none; }
.mag { color: #fff; }
.apps { display: flex; margin-left: 2px; }
.app { width: 55px; height: 50px; display: flex; align-items: center; justify-content: center; position: relative; flex: none; }
.app.on { background: linear-gradient(#ffffff14, #ffffff14) center / 49px 100% no-repeat; border-radius: 5px; }
.app.run::after, .app.on::after { content: ""; position: absolute; bottom: 1px; left: 23.5px; width: 8px; height: 4px; border-radius: 2px; background: #979d95; }
.app.on::after { width: 20px; left: 17.5px; background: #dca0e6; }
.mini { position: absolute; right: 7px; top: 4px; }
.badge { position: absolute; left: 20px; top: 4px; width: 34px; height: 20px; border-radius: 10px; background: #dca0e6; color: #111; font-size: 14px; line-height: 20px; text-align: center; }
.weather { display: flex; align-items: center; margin-left: 320px; line-height: 20px; padding-bottom: 1px; }
.weather span, .lang span, .clock span { display: block; }
.weather .sun { width: 24px; height: 24px; border-radius: 50%; background: linear-gradient(160deg, #f0a91f, #ef5b10); position: relative; margin-right: 13px; }
.sun b { position: absolute; left: 11px; top: -9px; width: 20px; height: 20px; border-radius: 50%; background: #ff99a4; color: #111; font-weight: 400; text-align: center; }
.dim { color: #b9bdb8; }
.tray { margin-left: auto; margin-right: 24px; display: flex; align-items: center; line-height: 20px; gap: 10px; }
.kb { margin-left: 13px; }
.lang { display: flex; flex-direction: column; align-items: center; margin: 0 13px 0 14px; }
.clock { display: flex; flex-direction: column; align-items: flex-end; width: 88px; margin-top: -2px; }
</style>
